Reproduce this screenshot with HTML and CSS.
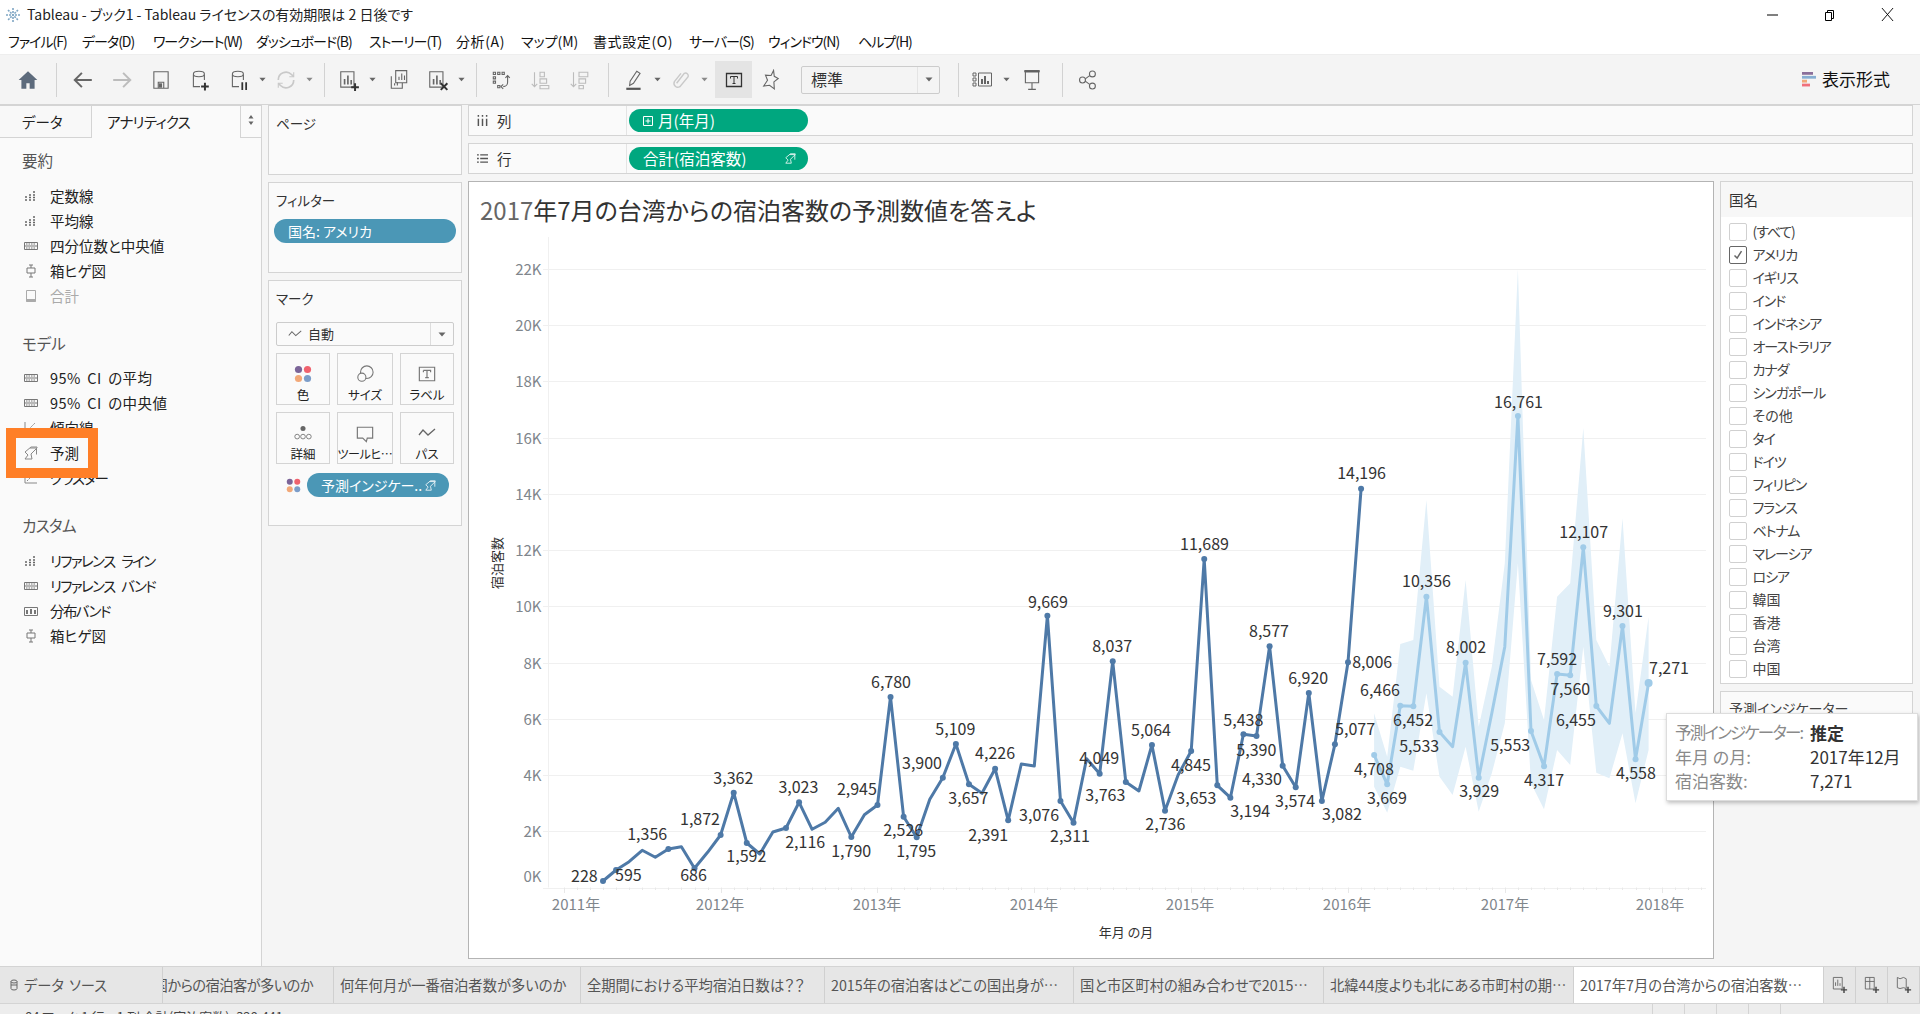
FILE: index.html
```html
<!DOCTYPE html>
<html lang="ja">
<head>
<meta charset="utf-8">
<title>Tableau - ブック1</title>
<link rel="stylesheet" href="styles.css">
</head>
<body>
<svg class="sprite" aria-hidden="true">
  <symbol id="i-bars" viewBox="0 0 14 14"><path d="M1 8h2M1 11h2M5 6h2M5 8.500h2M5 11h2M9 6h2M9 8.500h2M9 11h2M9 3h2" fill="none" stroke="#666" stroke-width="1.500"/></symbol>
  <symbol id="i-quart" viewBox="0 0 14 14"><path d="M.5 3.500h13v7H.5zM.5 7h13" fill="none" stroke="#777"/><path d="M2 5h10M2 9h10" stroke="#777" stroke-dasharray="1.500 1"/></symbol>
  <symbol id="i-box" viewBox="0 0 14 14"><path d="M3 4h8v5H3zM7 1v3M7 9v4M5 1h4M5 13h4" fill="none" stroke="#777"/></symbol>
  <symbol id="i-total" viewBox="0 0 14 14"><path d="M2.500 1.500h9v11h-9z" fill="none" stroke="#aaa"/><path d="M2.500 10h9v3h-9z" fill="#aaa"/></symbol>
  <symbol id="i-fore" viewBox="0 0 14 14"><path d="M1 6l3 3-3 4h7l-1-5 6-6V1H7L1 6z" fill="none" stroke="#888"/><path d="M6 2h6.500v6.500" fill="none" stroke="#888"/></symbol>
  <symbol id="i-trend" viewBox="0 0 14 14"><path d="M1 1v11h12" fill="none" stroke="#888"/><path d="M3 10l8-8" stroke="#888" stroke-dasharray="2 1"/></symbol>
  <symbol id="i-band" viewBox="0 0 14 14"><path d="M.5 3.500h13v8H.5z" fill="none" stroke="#777"/><path d="M3 10V6M7 10V5M11 10V6" stroke="#777" stroke-width="2"/></symbol>
  <symbol id="i-dots" viewBox="0 0 16 16"><circle cx="4" cy="4" r="3.200" fill="#7b6498"/><circle cx="12" cy="4" r="3.200" fill="#f0626e"/><circle cx="4" cy="12" r="3.200" fill="#f2a878"/><circle cx="12" cy="12" r="3.200" fill="#7c9dc9"/></symbol>
  <symbol id="i-path" viewBox="0 0 18 12"><path d="M1 8l4-5 5 5 7-6" fill="none" stroke="#666" stroke-width="1.300"/></symbol>
  <symbol id="i-caret" viewBox="0 0 8 5"><path d="M.5.500h7L4 4.500z" fill="#666"/></symbol>
  <symbol id="i-fore-w" viewBox="0 0 14 14"><path d="M1 6l3 3-3 4h7l-1-5 6-6V1H7L1 6z" fill="none" stroke="#fff"/><path d="M6 2h6.500v6.500" fill="none" stroke="#fff"/></symbol>
</svg>

<header class="titlebar">
  <svg class="logo" viewBox="0 0 16 16"><path d="M8 1v14M1 8h14M3 3l10 10M13 3L3 13" stroke="#7fa6c4" stroke-width="1.600" stroke-dasharray="2 1"/></svg>
  <span class="title-text">Tableau - ブック1 - Tableau ライセンスの有効期限は 2 日後です</span>
  <div class="winctl">
    <svg viewBox="0 0 12 12"><path d="M0 6h11" stroke="#000"/></svg>
    <svg viewBox="0 0 12 12"><path d="M1.500 3.500h6v8h-6zM3.500 3.500v-2h6v8h-2" fill="none" stroke="#000"/></svg>
    <svg viewBox="0 0 14 14"><path d="M1 0l12 14M13 0L1 14" stroke="#000" fill="none"/></svg>
  </div>
</header>

<nav class="menubar">
  <span class="kana">ファイル(F)</span><span class="kana">データ(D)</span><span class="kana">ワークシート(W)</span><span class="kana">ダッシュボード(B)</span><span class="kana">ストーリー(T)</span><span class="kanji">分析(A)</span><span>マップ(M)</span><span class="kanji">書式設定(O)</span><span class="kana">サーバー(S)</span><span class="kana">ウィンドウ(N)</span><span class="kana">ヘルプ(H)</span>
</nav>

<div class="toolbar">
  <span class="b"><svg viewBox="0 0 20 20"><path d="M10 2L1.500 10H4v8h4.500v-5h3v5H16v-8h2.500z" fill="#5d6b7c"/></svg></span>
  <i class="sep s1"></i>
  <span class="b m7"><svg viewBox="0 0 20 20"><path d="M18 10H3M9 3.500L2.500 10 9 16.500" fill="none" stroke="#666" stroke-width="1.800"/></svg></span>
  <span class="b m1 off"><svg viewBox="0 0 20 20"><path d="M2 10h15M11 3.500l6.500 6.500-6.500 6.500" fill="none" stroke="#aaa" stroke-width="1.800"/></svg></span>
  <span class="b m1"><svg viewBox="0 0 20 20"><path d="M3.500 2.500h13v15h-13zM7.500 17v-5h5v5" fill="none" stroke="#666"/><path d="M8 13h3v4H8z" fill="#666"/></svg></span>
  <span class="b m1"><svg viewBox="0 0 20 20"><path d="M4 5v11h6M14 5v5" fill="none" stroke="#666"/><ellipse cx="9" cy="4.500" rx="5" ry="2.500" fill="none" stroke="#666"/><path d="M11 16h7M14.500 12.500v7" stroke="#333" stroke-width="1.800"/></svg></span>
  <span class="b m1"><svg viewBox="0 0 20 20"><path d="M4 5v11h6M14 5v5" fill="none" stroke="#666"/><ellipse cx="9" cy="4.500" rx="5" ry="2.500" fill="none" stroke="#666"/><path d="M13 12v7M16.500 12v7" stroke="#333" stroke-width="1.600"/></svg></span>
  <span class="c"><svg><use href="#i-caret"/></svg></span>
  <span class="b off"><svg viewBox="0 0 20 20"><path d="M3 10a7 7 0 0 1 12-5l2 2M17 10a7 7 0 0 1-12 5l-2-2" fill="none" stroke="#bbb" stroke-width="1.500"/><path d="M17 3v4h-4M3 17v-4h4" fill="none" stroke="#bbb"/></svg></span>
  <span class="c off"><svg><use href="#i-caret"/></svg></span>
  <i class="sep s2"></i>
  <span class="b m5"><svg viewBox="0 0 20 20"><path d="M2.500 2.500h12v14h-12z" fill="none" stroke="#666"/><path d="M6 14V9M9 14V6M12 14v-4" stroke="#666" stroke-width="1.500"/><path d="M12 16.500h7M15.500 13v7" stroke="#333" stroke-width="1.800"/></svg></span>
  <span class="c"><svg><use href="#i-caret"/></svg></span>
  <span class="b m3"><svg viewBox="0 0 20 20"><path d="M7 1.500h10v11H7zM3 6.500v11h10v-5" fill="none" stroke="#666"/><path d="M10 10V7M12.500 10V4M15 10V6M6 15v-2M8.500 15v-3" stroke="#666"/></svg></span>
  <span class="b m1"><svg viewBox="0 0 20 20"><path d="M2.500 2.500h12v14h-12z" fill="none" stroke="#666"/><path d="M6 14V9M9 14V6M12 14v-4" stroke="#666" stroke-width="1.500"/><path d="M12.500 13l6 6M18.500 13l-6 6" stroke="#333" stroke-width="1.800"/></svg></span>
  <span class="c"><svg><use href="#i-caret"/></svg></span>
  <i class="sep s2"></i>
  <span class="b m5"><svg viewBox="0 0 20 20"><path d="M3 3h2v2H3zM7 3h2v2H7zM11 3h2v2h-2zM3 7h2v2H3zM3 11h2v2H3zM7 15h2v2H7z" fill="none" stroke="#666"/><path d="M16 6v6a4 4 0 0 1-4 4M14 8l2-2 2 2M12 14l-2 2 2 2" fill="none" stroke="#666"/></svg></span>
  <span class="b m1 off"><svg viewBox="0 0 20 20"><path d="M5 3v13M2.500 13.500L5 16l2.500-2.500" fill="none" stroke="#aaa"/><path d="M10 3h4v4h-4zM10 9h6v4h-6zM10 15h8v3h-8z" fill="none" stroke="#aaa"/></svg></span>
  <span class="b m1 off"><svg viewBox="0 0 20 20"><path d="M5 3v13M2.500 13.500L5 16l2.500-2.500" fill="none" stroke="#aaa"/><path d="M10 3h8v4h-8zM10 9h6v4h-6zM10 15h4v3h-4z" fill="none" stroke="#aaa"/></svg></span>
  <i class="sep s2"></i>
  <span class="b m6"><svg viewBox="0 0 20 20"><path d="M12.500 2l3 2-6 9-3.500 2 .5-4z" fill="none" stroke="#666"/><path d="M3 18h13" stroke="#555" stroke-width="2"/></svg></span>
  <span class="c"><svg><use href="#i-caret"/></svg></span>
  <span class="b off"><svg viewBox="0 0 20 20"><path d="M6 13l7-9a2.500 2.500 0 0 1 3.500 3L9 16a3.500 3.500 0 0 1-5-4.500L10 4" fill="none" stroke="#bbb" stroke-width="1.300"/></svg></span>
  <span class="c off"><svg><use href="#i-caret"/></svg></span>
  <span class="t-btn"><svg viewBox="0 0 20 20"><path d="M2.500 3.500h15v13h-15z" fill="none" stroke="#333" stroke-width="1.300"/><path d="M6.500 6.500h7v2M10 6.500v7M8.500 13.500h3M6.500 6.500v2" fill="none" stroke="#333"/></svg></span>
  <span class="b"><svg viewBox="0 0 20 20"><path d="M10 1l2 5 4 1-3 4 2 6-5-2-5 2 2-6-3-4 5-1z" fill="none" stroke="#666" transform="rotate(15 10 10)"/></svg></span>
  <span class="select"><span>標準</span><i class="sel-arrow"><svg><use href="#i-caret"/></svg></i></span>
  <i class="sep s3"></i>
  <span class="b m5"><svg viewBox="0 0 22 20"><path d="M1 3h3v3H1zM1 8h3v3H1zM1 13h3v3H1zM6.500 3h13v13h-13z" fill="none" stroke="#666"/><path d="M10 14V9M13 14V6M16 14v-3" stroke="#555" stroke-width="1.800"/></svg></span>
  <span class="c"><svg><use href="#i-caret"/></svg></span>
  <span class="b m2"><svg viewBox="0 0 20 20"><path d="M3 2h14" stroke="#555" stroke-width="2"/><path d="M4 2.500h12v10H4zM10 12.500v6M6.500 18.500h7" fill="none" stroke="#666"/></svg></span>
  <i class="sep s4"></i>
  <span class="b m6"><svg viewBox="0 0 20 20"><circle cx="5" cy="10" r="2.700" fill="none" stroke="#666"/><circle cx="14" cy="4.500" r="2.700" fill="none" stroke="#666"/><circle cx="14" cy="15.500" r="2.700" fill="none" stroke="#666"/><path d="M7.500 9l4-3M7.500 11l4 3" stroke="#666"/></svg></span>
  <span class="format">
    <svg viewBox="0 0 14 27" preserveAspectRatio="none"><path d="M0 0h11v5H0z" fill="#8a6f9a"/><path d="M0 7h14v5H0z" fill="#86aed2"/><path d="M0 14h5v5H0z" fill="#f2a878"/><path d="M0 21h8v5H0z" fill="#f0707c"/></svg>
    表示形式
  </span>
</div>

<main class="workspace">
  <aside class="left">
    <div class="tabs-top">
      <span class="tab-data">データ</span>
      <span class="tab-an">アナリティクス</span>
      <span class="tab-more"><svg viewBox="0 0 6 10"><path d="M3 0l2.500 3.500h-5zM3 10L.5 6.500h5z" fill="#666"/></svg></span>
    </div>
    <div class="an-body">
      <h3>要約</h3>
      <ul class="an-list">
        <li><svg><use href="#i-bars"/></svg><span>定数線</span></li>
        <li><svg><use href="#i-bars"/></svg><span>平均線</span></li>
        <li><svg><use href="#i-quart"/></svg><span>四分位数と中央値</span></li>
        <li><svg><use href="#i-box"/></svg><span>箱ヒゲ図</span></li>
        <li class="dis"><svg><use href="#i-total"/></svg><span>合計</span></li>
      </ul>
      <h3>モデル</h3>
      <ul class="an-list">
        <li><svg><use href="#i-quart"/></svg><span class="ci">95% CI の平均</span></li>
        <li><svg><use href="#i-quart"/></svg><span class="ci">95% CI の中央値</span></li>
        <li><svg><use href="#i-trend"/></svg><span>傾向線</span></li>
        <li class="hl"><svg><use href="#i-fore"/></svg><span>予測</span></li>
        <li><svg><use href="#i-trend"/></svg><span class="kana">クラスター</span></li>
      </ul>
      <h3 class="kana-h">カスタム</h3>
      <ul class="an-list">
        <li><svg><use href="#i-bars"/></svg><span class="kana">リファレンス ライン</span></li>
        <li><svg><use href="#i-quart"/></svg><span class="kana">リファレンス バンド</span></li>
        <li><svg><use href="#i-band"/></svg><span class="kana">分布バンド</span></li>
        <li><svg><use href="#i-box"/></svg><span>箱ヒゲ図</span></li>
      </ul>
    </div>
  </aside>

  <section class="cards">
    <div class="card page-card"><h4>ページ</h4></div>
    <div class="card filter-card">
      <h4>フィルター</h4>
      <div class="pill blue wide">国名: アメリカ</div>
    </div>
    <div class="card marks-card">
      <h4>マーク</h4>
      <div class="mark-select">
        <span class="ms-main"><svg><use href="#i-path"/></svg>自動</span>
        <span class="ms-arrow"><svg><use href="#i-caret"/></svg></span>
      </div>
      <div class="mark-grid">
        <div class="mk"><svg viewBox="0 0 16 16"><use href="#i-dots"/></svg><span>色</span></div>
        <div class="mk"><svg viewBox="0 0 20 20"><circle cx="12" cy="8" r="7" fill="none" stroke="#777" stroke-width="1.200"/><circle cx="6.500" cy="13.500" r="4.500" fill="#fafafa" stroke="#777" stroke-width="1.200"/></svg><span>サイズ</span></div>
        <div class="mk"><svg viewBox="0 0 20 20"><path d="M1.500 2.500h17v15h-17z" fill="none" stroke="#777" stroke-width="1.300"/><path d="M6 6h8v2M10 6v8M8 14h4M6 6v2" fill="none" stroke="#777" stroke-width="1.300"/></svg><span>ラベル</span></div>
        <div class="mk"><svg viewBox="0 0 20 20"><circle cx="10" cy="5" r="2.800" fill="#666"/><circle cx="3.500" cy="14" r="2.600" fill="none" stroke="#777"/><circle cx="10" cy="14" r="2.600" fill="none" stroke="#777"/><circle cx="16.500" cy="14" r="2.600" fill="none" stroke="#777"/></svg><span>詳細</span></div>
        <div class="mk"><svg viewBox="0 0 20 20"><path d="M1.500 2.500h17v12h-6l-1 4-4-4h-6z" fill="none" stroke="#777" stroke-width="1.300"/></svg><span class="clip">ツールヒ…</span></div>
        <div class="mk"><svg viewBox="0 0 18 12"><use href="#i-path"/></svg><span>パス</span></div>
      </div>
      <div class="mark-pill">
        <svg viewBox="0 0 16 16"><use href="#i-dots"/></svg>
        <div class="pill blue fore">予測インジケー.. <svg viewBox="0 0 14 14"><use href="#i-fore-w"/></svg></div>
      </div>
    </div>
  </section>

  <section class="view">
    <div class="shelf">
      <div class="shelf-label"><svg viewBox="0 0 12 12"><path d="M1.500 4v8M6 4v8M10.500 4v8M1.500 0v2M6 0v2M10.500 0v2" stroke="#555" stroke-width="1.600"/></svg>列</div>
      <div class="pill green"><svg class="plus" viewBox="0 0 10 10"><path d="M.5.500h9v9h-9zM5 2.500v5M2.500 5h5" fill="none" stroke="#fff"/></svg>月(年月)</div>
    </div>
    <div class="shelf">
      <div class="shelf-label"><svg viewBox="0 0 12 12"><path d="M0 2h2M0 6h2M0 10h2M3.500 2H12M3.500 6H12M3.500 10H12" stroke="#555" stroke-width="1.500"/></svg>行</div>
      <div class="pill green between">合計(宿泊客数)<svg class="pin" viewBox="0 0 14 14"><use href="#i-fore-w"/></svg></div>
    </div>
    <div class="stage">
      <div class="chart-card">
        <svg id="chart" class="chart" viewBox="469 182 1244 777"></svg>
      </div>
      <div class="side">
        <div class="side-card list-card">
          <div class="side-head">国名</div>
          <ul class="checks">
            <li><i></i>(すべて)</li>
            <li class="on"><i><svg viewBox="0 0 16 16"><path d="M4 8.500l3 3 5-8" fill="none" stroke="#666" stroke-width="1.700"/></svg></i>アメリカ</li>
            <li><i></i>イギリス</li>
            <li><i></i>インド</li>
            <li><i></i>インドネシア</li>
            <li><i></i>オーストラリア</li>
            <li><i></i>カナダ</li>
            <li><i></i>シンガポール</li>
            <li class="k"><i></i>その他</li>
            <li><i></i>タイ</li>
            <li><i></i>ドイツ</li>
            <li><i></i>フィリピン</li>
            <li><i></i>フランス</li>
            <li><i></i>ベトナム</li>
            <li><i></i>マレーシア</li>
            <li><i></i>ロシア</li>
            <li class="k"><i></i>韓国</li>
            <li class="k"><i></i>香港</li>
            <li class="k"><i></i>台湾</li>
            <li class="k"><i></i>中国</li>
          </ul>
        </div>
        <div class="side-card legend-card">予測インジケーター</div>
      </div>
    </div>
  </section>

  <div class="tooltip">
    <span class="k kana">予測インジケーター:</span><b>推定</b>
    <span class="k">年月 の月:</span><span>2017年12月</span>
    <span class="k">宿泊客数:</span><span>7,271</span>
  </div>
</main>

<footer class="sheetbar">
  <span class="st ds"><svg viewBox="0 0 8 12"><ellipse cx="4" cy="2.500" rx="3" ry="1.500" fill="none" stroke="#666"/><path d="M1 2.500v7a3 1.500 0 0 0 6 0v-7M1 6h6" fill="none" stroke="#666"/></svg>データ ソース</span>
  <span class="st w1 endclip"><span>どの国からの宿泊客が多いのか</span></span>
  <span class="st w2">何年何月が一番宿泊者数が多いのか</span>
  <span class="st w3">全期間における平均宿泊日数は？？</span>
  <span class="st w4">2015年の宿泊客はどこの国出身が…</span>
  <span class="st w5">国と市区町村の組み合わせで2015…</span>
  <span class="st w5">北緯44度よりも北にある市町村の期…</span>
  <span class="st w5 active">2017年7月の台湾からの宿泊客数…</span>
  <span class="st add"><svg viewBox="0 0 18 20"><path d="M1.500 1.500h10v13h-10z" fill="none" stroke="#666"/><path d="M4 11V7M6.500 11V4M9 11V8" stroke="#666"/><path d="M10 15.500h7M13.500 12v7" stroke="#444" stroke-width="1.600"/></svg></span>
  <span class="st add"><svg viewBox="0 0 18 20"><path d="M1.500 1.500h10v13h-10zM1.500 6h10M6.500 1.500v13" fill="none" stroke="#666"/><path d="M10 15.500h7M13.500 12v7" stroke="#444" stroke-width="1.600"/></svg></span>
  <span class="st add"><svg viewBox="0 0 18 20"><path d="M1.500 1.500l3 1.500 4-1.500 3 1.500v11l-3-1-4 1-3-1z" fill="none" stroke="#666"/><path d="M10 15.500h7M13.500 12v7" stroke="#444" stroke-width="1.600"/></svg></span>
</footer>
<div class="status">
  <span class="s-text">84 マーク 1 行 x 1 列 合計(宿泊客数): 328,441</span>
  <span class="s-cells"><i></i><i></i><i></i><i></i><i class="grow"></i></span>
</div>

<script src="chart.js"></script>
</body>
</html>
```
FILE: styles.css
```css
*, *::before, *::after { box-sizing: border-box; }
html, body { margin: 0; height: 100%; }
body {
  width: 1920px; height: 1014px; overflow: hidden;
  display: flex; flex-direction: column;
  background: #f5f5f5; color: #333;
  font-family: "Noto Sans CJK JP", "Noto Sans", sans-serif;
  font-size: 14px; line-height: 1.2;
  font-feature-settings: "palt";
}
ul { list-style: none; margin: 0; padding: 0; }
h3, h4 { margin: 0; font-weight: 400; }
.sprite { position: absolute; width: 0; height: 0; }

.titlebar { height: 29px; flex: none; background: #fff; display: flex; align-items: center; padding: 0 0 0 5px; color: #222; }
.logo { width: 16px; height: 16px; margin-right: 6px; }
.title-text { font-size: 14px; }
.winctl { margin-left: auto; display: flex; align-items: center; }
.winctl svg { width: 12px; height: 12px; margin-right: 45px; }
.winctl svg:last-child { margin-right: 26px; width: 13px; height: 13px; }

.menubar { height: 25px; flex: none; background: #fff; display: grid; grid-template-columns: 74px 71px 103px 113px 87px 65px 72px 96px 79px 90px auto; align-items: center; padding: 0 0 0 8px; color: #111; white-space: nowrap; }
.menubar .kana { letter-spacing: -1px; }
.menubar .kanji { letter-spacing: .6px; }

.toolbar { height: 51px; flex: none; background: #f4f4f4; border-bottom: 1px solid #d4d4d4; border-top: 1px solid #eee; display: flex; align-items: center; padding-left: 9px; }
.b { width: 38px; height: 36px; display: flex; align-items: center; justify-content: center; flex: none; }
.b svg { width: 22px; height: 22px; }
.c { width: 10px; margin-left: -1px; height: 36px; display: flex; align-items: center; justify-content: center; flex: none; }
.c svg { width: 7px; height: 5px; }
.off { opacity: .75; }
.m1 { margin-left: 1px; } .m2 { margin-left: 2px; } .m3 { margin-left: 3px; } .m5 { margin-left: 5px; } .m6 { margin-left: 6px; } .m7 { margin-left: 7px; }
.sep { width: 1px; height: 34px; background: #d2d2d2; flex: none; }
.s1 { margin-left: 9px; } .s2 { margin-left: 10px; } .s3 { margin-left: 18px; } .s4 { margin-left: 11px; }
.t-btn { margin-left: 6px; width: 37px; height: 37px; background: #e4e4e4; display: flex; align-items: center; justify-content: center; flex: none; }
.t-btn svg { width: 20px; height: 20px; }
.select { margin-left: 11px; width: 139px; height: 28px; border: 1px solid #ccc; border-radius: 2px; background: #f4f4f4; display: flex; align-items: center; justify-content: space-between; padding-left: 9px; font-size: 16px; color: #333; flex: none; }
.sel-arrow { width: 22px; display: flex; justify-content: center; border-left: 1px solid #e4e4e4; height: 100%; align-items: center; }
.sel-arrow svg { width: 8px; height: 5px; }
.format { margin-left: auto; margin-right: 30px; display: flex; align-items: center; gap: 6px; font-size: 17px; color: #111; }
.format svg { width: 14px; height: 15px; }

.workspace { flex: 1; min-height: 0; display: flex; position: relative; }
.left { width: 262px; flex: none; background: #fafafa; border-right: 1px solid #d4d4d4; border-top: 1px solid #d4d4d4; }
.tabs-top { height: 32px; display: flex; align-items: stretch; border-bottom: 1px solid #d4d4d4; }
.tab-data { width: 92px; border-right: 1px solid #d4d4d4; display: flex; align-items: center; padding-left: 22px; background: #f8f8f8; }
.tab-an { width: 148px; display: flex; align-items: center; padding-left: 15px; background: #fafafa; margin-bottom: -1px; letter-spacing: -.7px; }
.tab-more { flex: 1; border-left: 1px solid #d4d4d4; display: flex; align-items: center; justify-content: center; background: #fafafa; }
.tab-more svg { width: 6px; height: 10px; margin-top: -3px; }
.tab-data, .tab-an { font-size: 14.500px; color: #222; }
.an-body { padding: 10px 0 0 22px; }
.an-body h3 { font-size: 15.500px; height: 25px; line-height: 25px; color: #555; margin-bottom: 10px; }
.an-body .kana-h { letter-spacing: -.6px; }
.an-list { margin-bottom: 22.500px; margin-left: 2px; }
.an-list li { height: 25px; display: flex; align-items: center; color: #222; position: relative; font-size: 14.500px; }
.an-list svg { width: 14px; height: 14px; margin-right: 12px; flex: none; }
.an-list .kana { letter-spacing: -1.600px; word-spacing: 5px; }
.an-list .ci { letter-spacing: .4px; word-spacing: 3px; }
.an-list .dis { color: #aaa; }
.hl { z-index: 1; }
.hl::before { content: ""; position: absolute; left: -18px; top: -12.500px; width: 92px; height: 50px; border: 10px solid #ff7f27; background: #fafafa; }
.hl > * { position: relative; }

.cards { width: 194px; flex: none; margin-left: 6px; display: flex; flex-direction: column; gap: 7px; }
.card { background: #fafafa; border: 1px solid #d4d4d4; padding: 8px 7px 0 7px; }
.card h4 { font-size: 13.500px; height: 18px; line-height: 18px; color: #333; }
.page-card { height: 70px; }
.filter-card { height: 91px; padding: 8px 5px 0; }
.filter-card h4 { padding-left: 2px; }
.marks-card { height: 246px; }
.pill { height: 24px; border-radius: 12px; color: #fff; display: flex; align-items: center; }
.blue { background: #4b97b6; }
.green { background: #00a77f; }
.wide { margin-top: 10px; padding-left: 14px; }
.mark-select { margin-top: 15px; height: 24px; border: 1px solid #ccc; border-radius: 2px; display: flex; background: #fafafa; }
.ms-main { flex: 1; display: flex; align-items: center; padding-left: 11px; font-size: 13px; color: #333; gap: 6px; border-right: 1px solid #ddd; }
.ms-main svg { width: 14px; height: 10px; }
.ms-arrow { width: 22px; display: flex; align-items: center; justify-content: center; }
.ms-arrow svg { width: 8px; height: 5px; }
.mark-grid { display: grid; grid-template-columns: 54px 56px 54px; gap: 7px; margin-top: 7px; }
.mk { height: 52px; border: 1px solid #d4d4d4; display: flex; flex-direction: column; align-items: center; justify-content: flex-end; padding-bottom: 2px; font-size: 12.500px; color: #222; gap: 4px; background: #fafafa; }
.mk svg { width: 18px; height: 18px; }
.mk span { white-space: nowrap; }
.clip { font-size: 12px; letter-spacing: -.4px; }
.mark-pill { display: flex; align-items: center; margin-top: 9px; padding-left: 10px; gap: 6px; }
.mark-pill > svg { width: 15px; height: 15px; }
.fore { width: 142px; padding-left: 14px; font-size: 14px; justify-content: flex-start; white-space: nowrap; gap: 3px; }
.fore svg { width: 11px; height: 11px; }

.view { flex: 1; min-width: 0; margin-left: 6px; margin-right: 7px; display: flex; flex-direction: column; gap: 7px; padding-bottom: 7px; }
.shelf { height: 31px; flex: none; background: #fafafa; border: 1px solid #d4d4d4; display: flex; align-items: center; }
.shelf-label { width: 158px; height: 100%; border-right: 1px solid #e4e4e4; display: flex; align-items: center; padding-left: 8px; gap: 9px; font-size: 14.500px; }
.shelf-label svg { width: 11px; height: 11px; }
.shelf .pill { margin-left: 2px; width: 179px; height: 23px; padding-left: 14px; font-size: 15.500px; }
.plus { width: 10px; height: 10px; margin-right: 5px; flex: none; }
.between { justify-content: space-between; padding-right: 12px; }
.pin { width: 11px; height: 11px; }

.stage { flex: 1; min-height: 0; display: flex; gap: 6px; }
.chart-card { width: 1246px; flex: none; background: #fff; border: 1px solid #b4b4b4; }
.chart { display: block; width: 1244px; height: 777px; font-family: "Noto Sans CJK JP", "Noto Sans", sans-serif; }
.chart text { font-feature-settings: "palt"; }
.c-title { font-size: 24px; fill: #333; }
.c-title-num { fill: #666; }
.c-label { font-size: 16px; fill: #333; text-anchor: middle; }
.c-yt { font-size: 15px; fill: #80868c; text-anchor: end; }
.c-xt { font-size: 15px; fill: #80868c; text-anchor: middle; }
.c-at { font-size: 13px; fill: #333; text-anchor: middle; }

.side { flex: 1; display: flex; flex-direction: column; gap: 7px; }
.side-card { background: #fff; border: 1px solid #d4d4d4; }
.list-card { height: 503px; }
.side-head { height: 35px; background: #f7f7f7; padding-left: 8px; display: flex; align-items: center; font-size: 14.500px; }
.checks { padding: 3px 0 0 7.500px; }
.checks li { height: 23px; display: flex; align-items: center; gap: 6px; color: #444; letter-spacing: -1.100px; }
.checks .k { letter-spacing: 0; }
.checks i { width: 18px; height: 18px; border: 1px solid #d0d0d0; border-radius: 2px; background: #fff; flex: none; display: flex; align-items: center; justify-content: center; }
.checks .on i { border-color: #666; }
.checks svg { width: 14px; height: 14px; }
.legend-card { height: 80px; background: #fafafa; padding: 8px 8px; color: #444; }

.tooltip { position: absolute; left: 1666px; top: 608px; width: 252px; height: 88px; background: #fff; border: 1px solid #ddd; box-shadow: 1px 2px 4px rgba(0,0,0,.25); display: grid; grid-template-columns: 135px 1fr; grid-auto-rows: 24px; padding: 7px 0 0 8px; align-items: center; color: #333; font-size: 17px; }
.tooltip .k { color: #8a8a8a; white-space: nowrap; }
.tooltip .kana { letter-spacing: -1.800px; font-size: 16.500px; }
.tooltip b { font-weight: 700; }

.sheetbar { height: 38px; flex: none; display: flex; background: #e6e6e6; border-top: 1px solid #d4d4d4; border-bottom: 1px solid #d4d4d4; color: #555; white-space: nowrap; }
.st { display: flex; align-items: center; border-right: 1px solid #d0d0d0; overflow: hidden; padding-left: 6px; flex: none; font-size: 14.300px; }
.ds { width: 162px; padding-left: 10px; gap: 6px; border-right: none; word-spacing: 2px; }
.ds svg { width: 8px; height: 12px; }
.w1 { width: 172px; justify-content: flex-end; padding: 0 20px 0 0; border-left: 1px solid #d0d0d0; letter-spacing: -.6px; }
.endclip span { flex: none; }
.w2 { width: 247px; }
.w3 { width: 244px; }
.w4 { width: 249px; }
.w5 { width: 250px; }
.active { background: #fff; color: #555; }
.add { width: 32px; justify-content: center; padding: 0; }
.add svg { width: 16px; height: 18px; }

.status { height: 10px; flex: none; background: #ededed; display: flex; overflow: hidden; color: #444; font-size: 13px; line-height: 18px; padding-top: 4px; }
.s-text { padding-left: 25px; white-space: nowrap; }
.s-cells { margin-left: auto; display: flex; height: 10px; margin-top: -4px; }
.s-cells i { width: 32px; border-left: 1px solid #d4d4d4; }
.s-cells .grow { width: 140px; }
```
FILE: chart.js
```js
(function () {
  var NS = 'http://www.w3.org/2000/svg';
  var svg = document.getElementById('chart');
  function el(name, attrs, text) {
    var n = document.createElementNS(NS, name);
    for (var k in attrs) n.setAttribute(k, attrs[k]);
    if (text !== undefined) n.textContent = text;
    svg.appendChild(n);
    return n;
  }
  var X0 = 563.8, DX = 13.07;
  function mx(i) { return X0 + DX * i; }
  function yPx(v) { return 887.5 - v * 0.02812; }

  el('line', { x1: 548.5, x2: 548.5, y1: 237, y2: 887.5, stroke: '#f0f0f0' });
  for (var k = 0; k <= 22; k += 2) {
    var gy = Math.round(yPx(k * 1000)) + 0.5;
    el('line', { x1: 543, x2: 1706, y1: gy, y2: gy, stroke: '#f0f0f0' });
    el('text', { x: 541.5, y: (k === 0 ? 876.5 : gy) + 5, 'class': 'c-yt' }, k + 'K');
  }
  for (var m = 0; m <= 88; m++) {
    var tx = Math.round(mx(m)) + 0.5;
    if (tx > 1706) break;
    el('line', { x1: tx, x2: tx, y1: 887.5, y2: m % 12 === 0 ? 893 : 890, stroke: '#e8e8e8' });
  }
  [[2011, 576], [2012, 720], [2013, 877], [2014, 1034], [2015, 1190], [2016, 1347], [2017, 1505], [2018, 1660]].forEach(function (t) {
    el('text', { x: t[1], y: 910, 'class': 'c-xt' }, t[0] + '年');
  });

  var title = el('text', { x: 480, y: 220, 'class': 'c-title' });
  var num = document.createElementNS(NS, 'tspan');
  num.setAttribute('class', 'c-title-num');
  num.textContent = '2017';
  title.appendChild(num);
  title.appendChild(document.createTextNode('年7月の台湾からの宿泊客数の予測数値を答えよ'));

  el('text', { x: 1126, y: 937, 'class': 'c-at' }, '年月 の月');
  el('text', { x: 0, y: 0, 'class': 'c-at', transform: 'translate(502,563) rotate(-90)' }, '宿泊客数');

  function ya(z) { return 600 + z / 3; }
  function yb(z) { return 440 + z / 3; }

  var actualY = [843, 810, 785, 751, 772, 747, 740, 805, 757, 705, 578, 729, 762, 696, 684, 607, 688, 667, 625, 711, 644, 615, 291, 650, 712, 598, 533, 432, 553, 580, 506, 661, 492, 498, 47, 603].map(ya)
    .concat([1148, 956, 1001, 664, 1026, 1053, 915, 1112, 1005, 933, 357, 1036, 1073, 883, 888, 619, 977, 1042, 759, 1083, 913, 667, 146].map(yb));
  var dotsActual = { 3: 1, 4: 1, 8: 1, 10: 1, 12: 1, 13: 1, 14: 1, 17: 1, 18: 1, 22: 1, 24: 1, 25: 1, 26: 1, 27: 1, 29: 1, 30: 1, 31: 1, 33: 1, 34: 1, 37: 1, 38: 1, 39: 1, 41: 1, 42: 1, 43: 1, 45: 1, 46: 1, 48: 1, 49: 1, 50: 1, 51: 1, 52: 1, 53: 1, 54: 1, 55: 1, 56: 1, 57: 1, 58: 1, 59: 1, 60: 1, 61: 1 };

  var foreY = [945, 1033, 797, 799, 470, 876, 920, 668, 1013, 820, 620, -72, 873, 979, 702, 706, 322, 798, 850, 558, 958, 729].map(yb);
  var dotsFore = { 62: 1, 63: 1, 64: 1, 65: 1, 66: 1, 67: 1, 69: 1, 70: 1, 73: 1, 74: 1, 75: 1, 76: 1, 77: 1, 78: 1, 79: 1, 81: 1, 82: 1, 83: 1 };

  var up = [820, 950, 612, 600, 180, 740, 770, 420, 860, 680, 370, -513, 720, 840, 470, 430, -36, 600, 680, 235, 820, 530];
  var lo = [1040, 1118, 980, 992, 760, 1010, 1065, 920, 1115, 1000, 850, 370, 1030, 1108, 930, 975, 620, 998, 1015, 880, 1090, 930];
  var band = [], i;
  for (i = 0; i < up.length; i++) band.push(mx(62 + i).toFixed(1) + ',' + yb(up[i]).toFixed(1));
  for (i = lo.length - 1; i >= 0; i--) band.push(mx(62 + i).toFixed(1) + ',' + yb(lo[i]).toFixed(1));
  el('polygon', { points: band.join(' '), fill: '#e1eff8' });

  function pts(arr, start) {
    return arr.map(function (y, j) { return mx(start + j).toFixed(1) + ',' + y.toFixed(1); }).join(' ');
  }
  el('polyline', { points: pts(foreY, 62), fill: 'none', stroke: '#a0cbe8', 'stroke-width': 3, 'stroke-linejoin': 'round' });
  el('polyline', { points: pts(actualY, 3), fill: 'none', stroke: '#4e79a7', 'stroke-width': 3, 'stroke-linejoin': 'round' });
  actualY.forEach(function (y, j) {
    if (dotsActual[3 + j]) el('circle', { cx: mx(3 + j), cy: y, r: 3, fill: '#4e79a7' });
  });
  foreY.forEach(function (y, j) {
    if (dotsFore[62 + j]) el('circle', { cx: mx(62 + j), cy: y, r: j === 21 ? 4 : 3, fill: '#a0cbe8' });
  });

  function la(t, zx, zy) { return [t, 470 + zx / 2.613, 600 + zy / 3]; }
  function lb(t, zx, zy) { return [t, 1060 + zx / 2.45, 440 + zy / 3]; }
  [
    la('228', 299, 828), la('595', 414, 827), la('1,356', 463, 704), la('686', 584, 827), la('1,872', 601, 659),
    la('3,362', 688, 536), la('1,592', 722, 770), la('3,023', 858, 563), la('2,116', 876, 728), la('1,790', 996, 755),
    la('2,945', 1011, 569), la('6,780', 1100, 248), la('2,526', 1132, 692), la('1,795', 1166, 755), la('3,900', 1181, 491),
    la('5,109', 1268, 389), la('3,657', 1302, 596), la('4,226', 1372, 461), la('2,391', 1354, 705), la('3,076', 1487, 647),
    la('9,669', 1510, 8), ['2,311', 1070, 836.5],
    lb('8,037', 128, 620), lb('4,049', 96, 956), lb('3,763', 111, 1067), lb('5,064', 223, 872), lb('2,736', 258, 1154),
    lb('4,845', 321, 977), lb('11,689', 354, 314), lb('3,653', 334, 1076), lb('3,194', 466, 1115), lb('5,438', 449, 840),
    lb('5,390', 481, 931), lb('4,330', 495, 1019), lb('8,577', 512, 575), lb('3,574', 576, 1084), lb('6,920', 608, 716),
    lb('3,082', 691, 1124), lb('5,077', 723, 869), lb('8,006', 765, 668), lb('14,196', 739, 101), lb('4,708', 769, 989),
    lb('3,669', 801, 1076), lb('6,466', 784, 751), lb('6,452', 865, 842), lb('5,533', 880, 920), lb('10,356', 898, 425),
    lb('8,002', 995, 623), lb('3,929', 1027, 1055), lb('5,553', 1103, 917), ['16,761', 1518.5, 402], lb('4,317', 1186, 1022),
    lb('7,592', 1218, 659), lb('7,560', 1250, 748), lb('12,107', 1283, 277), lb('6,455', 1264, 842), lb('9,301', 1379, 515),
    lb('4,558', 1411, 1001), lb('7,271', 1492, 686)
  ].forEach(function (l) {
    el('text', { x: l[1].toFixed(1), y: (l[2] + 5.5).toFixed(1), 'class': 'c-label' }, l[0]);
  });
})();
```
